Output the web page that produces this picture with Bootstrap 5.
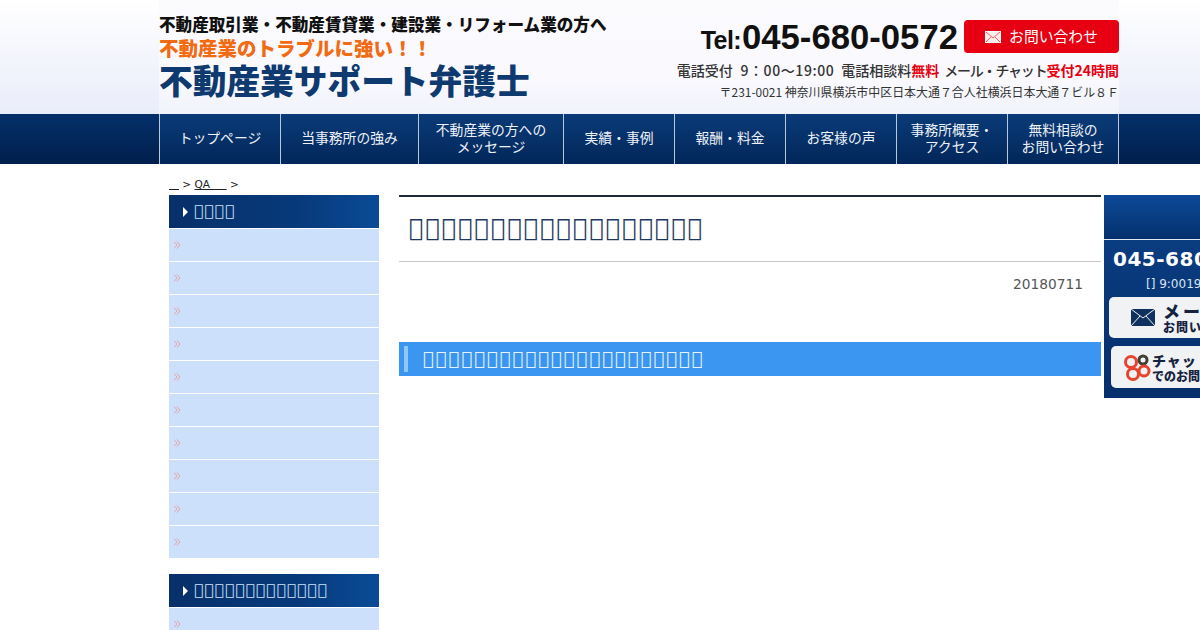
<!DOCTYPE html>
<html lang="ja">
<head>
<meta charset="utf-8">
<title>不動産業サポート弁護士</title>
<link rel="stylesheet" href="https://cdn.jsdelivr.net/npm/bootstrap@5.3.0/dist/css/bootstrap.min.css">
<style>
html,body{overflow-x:hidden}
body{font-family:"DejaVu Sans",sans-serif;background:#fff;color:#333;margin:0}
.site-frame{width:1278px}
.inner-frame{width:960px;margin:0 auto}
.head-band{height:114px;background:linear-gradient(#fff,#e9ecfa)}
.head-inner{height:114px;background:linear-gradient(#fbfbfe 0,#f9f9fe 70%,#f1f3fb 100%);font-family:"Noto Sans CJK JP",sans-serif}
.lead-a{font-size:16.6px;line-height:18px;font-weight:900;color:#111;padding-top:15px;white-space:nowrap}
.lead-b{font-size:19.5px;line-height:20px;font-weight:900;color:#f26a11;margin-top:5px;white-space:nowrap}
.lead-c{font-size:33.7px;line-height:36px;font-weight:900;color:#0e3a70;margin-top:4px;white-space:nowrap}
.tel-row{padding-top:20px;height:53px}
.tel-label{font-family:"Liberation Sans",sans-serif;font-weight:700;color:#111;font-size:25px;line-height:33px;letter-spacing:-.6px;padding:4px 1px 0 0}
.tel-num{font-family:"Liberation Sans",sans-serif;font-weight:700;color:#111;font-size:34.7px;line-height:33px;margin-right:6px;padding-top:1px}
.mail-btn{width:155px;height:33px;background:#e60012;border-radius:4px;color:#fff;font-size:14.8px;line-height:1;gap:8px}
.hours{font-size:14px;line-height:18px;font-weight:500;color:#333;margin-top:8px;white-space:nowrap}
.hours b{color:#e60012;font-weight:700}
.time-span{letter-spacing:.6px;margin:0 3px 0 4px}
.chat-span{letter-spacing:-1.2px;margin-left:5px}
.addr{font-size:11.95px;line-height:16px;color:#333;margin-top:5px;white-space:nowrap}
.nav-band{height:50px;background:linear-gradient(#04306a,#011f4c)}
.nav-strip{height:50px;background:linear-gradient(#0a3b78,#02275a);font-family:"Noto Sans CJK JP",sans-serif}
.nav-cell{height:50px;border-left:1px solid #b9c7d9;color:#eef2f7;font-size:13.8px;line-height:17px;text-align:center;text-decoration:none;padding-bottom:3px}
.nav-cell:last-child{border-right:1px solid #b9c7d9}
.content-wrap{padding:12px 18px 0 10px;position:relative}
.crumb{font-size:10.5px;line-height:14px;height:19px;padding-top:1px;color:#222;white-space:pre}
.crumb a{color:#222}
.side-col{width:210px;flex:none}
.side-head{height:33px;background:linear-gradient(90deg,#08306a 0,#07397a 60%,#0a4b96 100%);color:#cfe4fa;font-size:15px;letter-spacing:1.3px;line-height:33px;gap:6px;padding-left:14px;margin:0;font-weight:400}
.side-list{margin:1px 0 16px}
.side-item{height:33px;background:#cde0fb;border-bottom:1px solid #fff;padding-left:5px}
.side-item:last-child{border-bottom:0;height:32px}
.main-col{width:702px;flex:none;margin-left:20px}
.page-title{border-top:2px solid #1d2b3a;border-bottom:1px solid #c8c8c8;height:67px;font-size:24px;letter-spacing:2px;line-height:63px;padding-left:10px;color:#1f3864;font-weight:400;margin:0}
.post-date{font-size:13.75px;line-height:20px;color:#555;text-align:right;padding:12px 18px 0 0;height:80px}
.section-bar{height:34px;background:#3a96f0;color:#e8f3fd;font-size:18px;letter-spacing:2px;line-height:34px;font-weight:400;margin:0;padding-left:24px;position:relative}
.section-bar::before{content:"";position:absolute;left:5px;top:4px;bottom:4px;width:4px;background:#8cc8f9}
.float-panel{position:fixed;left:1104px;top:195px;width:96px;height:203px;background:linear-gradient(#0b4086,#062f6b);overflow:hidden}
.float-top{height:45px;background:linear-gradient(#0d4a98,#04306e);border-bottom:1px solid #dfe7f0}
.float-tel{font-weight:700;font-size:20px;line-height:24px;color:#fff;letter-spacing:.5px;padding:7px 0 0 9px;white-space:nowrap}
.float-hours{font-size:12px;line-height:14px;color:#d9e4f2;padding:6px 0 0 42px;white-space:nowrap}
.float-btn{position:absolute;left:5px;width:200px;background:#f0f2f4;border-radius:5px;color:#16233f;font-family:"Noto Sans CJK JP",sans-serif;font-weight:900}
.float-btn.mail{top:102px;height:41px;gap:8px;padding-left:22px}
.float-btn.chat{left:7px;top:151px;height:42px;padding-left:12px;gap:1px}
.mail .btn-a{font-size:17px;line-height:18px;letter-spacing:3px;white-space:nowrap}
.mail .btn-b{font-size:12px;line-height:14px;letter-spacing:1px;white-space:nowrap}
.chat .btn-a{font-size:14px;line-height:17px;letter-spacing:1px;white-space:nowrap}
.chat .btn-b{font-size:12px;line-height:13px;letter-spacing:0;white-space:nowrap}
</style>
</head>
<body>
<div class="site-frame">
  <header class="head-band">
    <div class="inner-frame head-inner d-flex justify-content-between">
      <div>
        <div class="lead-a">不動産取引業・不動産賃貸業・建設業・リフォーム業の方へ</div>
        <div class="lead-b">不動産業のトラブルに強い&#xFF01;&#xFF01;</div>
        <div class="lead-c">不動産業サポート弁護士</div>
      </div>
      <div class="text-end">
        <div class="tel-row d-flex justify-content-end">
          <span class="tel-label">Tel:</span><span class="tel-num">045-680-0572</span>
          <a class="mail-btn d-flex align-items-center justify-content-center text-decoration-none" href="#">
            <svg width="16" height="12" viewBox="0 0 16 12"><rect x=".5" y=".5" width="15" height="11" fill="#fdecec" stroke="#fff"/><path d="M1 1l7 6 7-6M1 11l5-5M15 11l-5-5" fill="none" stroke="#e66"/></svg>
            <span>お問い合わせ</span>
          </a>
        </div>
        <div class="hours">電話受付<span class="time-span"> 9&#xFF1A;00&#xFF5E;19:00 </span>電話相談料<b>無料</b><span class="chat-span">メール・チャット</span><b>受付24時間</b></div>
        <div class="addr">〒231-0021 神奈川県横浜市中区日本大通&#xFF17;合人社横浜日本大通&#xFF17;ビル&#xFF18;&#xFF26;</div>
      </div>
    </div>
  </header>
  <nav class="nav-band">
    <div class="inner-frame nav-strip d-flex">
      <a class="nav-cell d-flex align-items-center justify-content-center" style="width:121px" href="#">トップページ</a>
      <a class="nav-cell d-flex align-items-center justify-content-center" style="width:138px" href="#">当事務所の強み</a>
      <a class="nav-cell d-flex align-items-center justify-content-center" style="width:145px" href="#">不動産業の方への<br>メッセージ</a>
      <a class="nav-cell d-flex align-items-center justify-content-center" style="width:111px" href="#">実績・事例</a>
      <a class="nav-cell d-flex align-items-center justify-content-center" style="width:111px" href="#">報酬・料金</a>
      <a class="nav-cell d-flex align-items-center justify-content-center" style="width:111px" href="#">お客様の声</a>
      <a class="nav-cell d-flex align-items-center justify-content-center" style="width:111px" href="#">事務所概要・<br>アクセス</a>
      <a class="nav-cell d-flex align-items-center justify-content-center" style="width:112px" href="#">無料相談の<br>お問い合わせ</a>
    </div>
  </nav>
  <div class="inner-frame content-wrap">
    <div class="crumb"><a href="#">&nbsp;&nbsp;&nbsp;</a> &gt; <a href="#">QA&nbsp;&nbsp;&nbsp;&nbsp;&nbsp;</a> &gt;</div>
    <div class="d-flex">
      <aside class="side-col">
        <h3 class="side-head d-flex align-items-center"><svg width="5" height="10" viewBox="0 0 5 10"><path d="M0 0l5 5-5 5z" fill="#fff"/></svg><span id="tofuA"></span></h3>
        <div class="side-list" id="listA"></div>
        <h3 class="side-head d-flex align-items-center"><svg width="5" height="10" viewBox="0 0 5 10"><path d="M0 0l5 5-5 5z" fill="#fff"/></svg><span id="tofuB"></span></h3>
        <div class="side-list" id="listB"></div>
      </aside>
      <main class="main-col">
        <h1 class="page-title" id="tofuC"></h1>
        <div class="post-date">20180711</div>
        <h2 class="section-bar" id="tofuD"></h2>
      </main>
    </div>
  </div>
</div>
<div class="float-panel">
  <div class="float-top"></div>
  <div class="float-tel">045-680-0572</div>
  <div class="float-hours">[] 9:0019:00</div>
  <a class="float-btn mail d-flex align-items-center text-decoration-none" href="#">
    <svg width="24" height="17" viewBox="0 0 24 17" class="flex-shrink-0"><rect width="24" height="17" fill="#10315f"/><path d="M0 0l12 9 12-9M0 17l9-10M24 17l-9-10" fill="none" stroke="#f0f2f4"/></svg>
    <span><span class="btn-a d-block">メール</span><span class="btn-b d-block">お問い合わせ</span></span>
  </a>
  <a class="float-btn chat d-flex align-items-center text-decoration-none" href="#">
    <svg width="28" height="28" viewBox="0 0 28 28" class="flex-shrink-0"><g fill="none" stroke-width="3"><circle cx="8" cy="9" r="5.5" stroke="#e8432e"/><circle cx="20" cy="7" r="4" stroke="#3f4034"/><circle cx="10" cy="21" r="5.5" stroke="#e8432e"/><circle cx="21" cy="18" r="5" stroke="#e8432e"/></g></svg>
    <span><span class="btn-a d-block">チャット</span><span class="btn-b d-block">でのお問い合わせ</span></span>
  </a>
</div>
<script>
var mark='<svg width="6" height="8" viewBox="0 0 6 8"><path d="M0 .5l3 3.5-3 3.5M3 .5l3 3.5-3 3.5" fill="none" stroke="#e3a3a3"/></svg>';
function fill(id,n){var h='';for(var i=0;i<n;i++){h+='<div class="side-item d-flex align-items-center">'+mark+'</div>';}document.getElementById(id).innerHTML=h;}
fill('listA',10);fill('listB',3);
function tofu(id,n){document.getElementById(id).textContent=new Array(n+1).join('\uE000');}
tofu('tofuA',4);tofu('tofuB',13);tofu('tofuC',18);tofu('tofuD',22);
</script>
<script src="https://cdn.jsdelivr.net/npm/bootstrap@5.3.0/dist/js/bootstrap.bundle.min.js"></script>
</body>
</html>
